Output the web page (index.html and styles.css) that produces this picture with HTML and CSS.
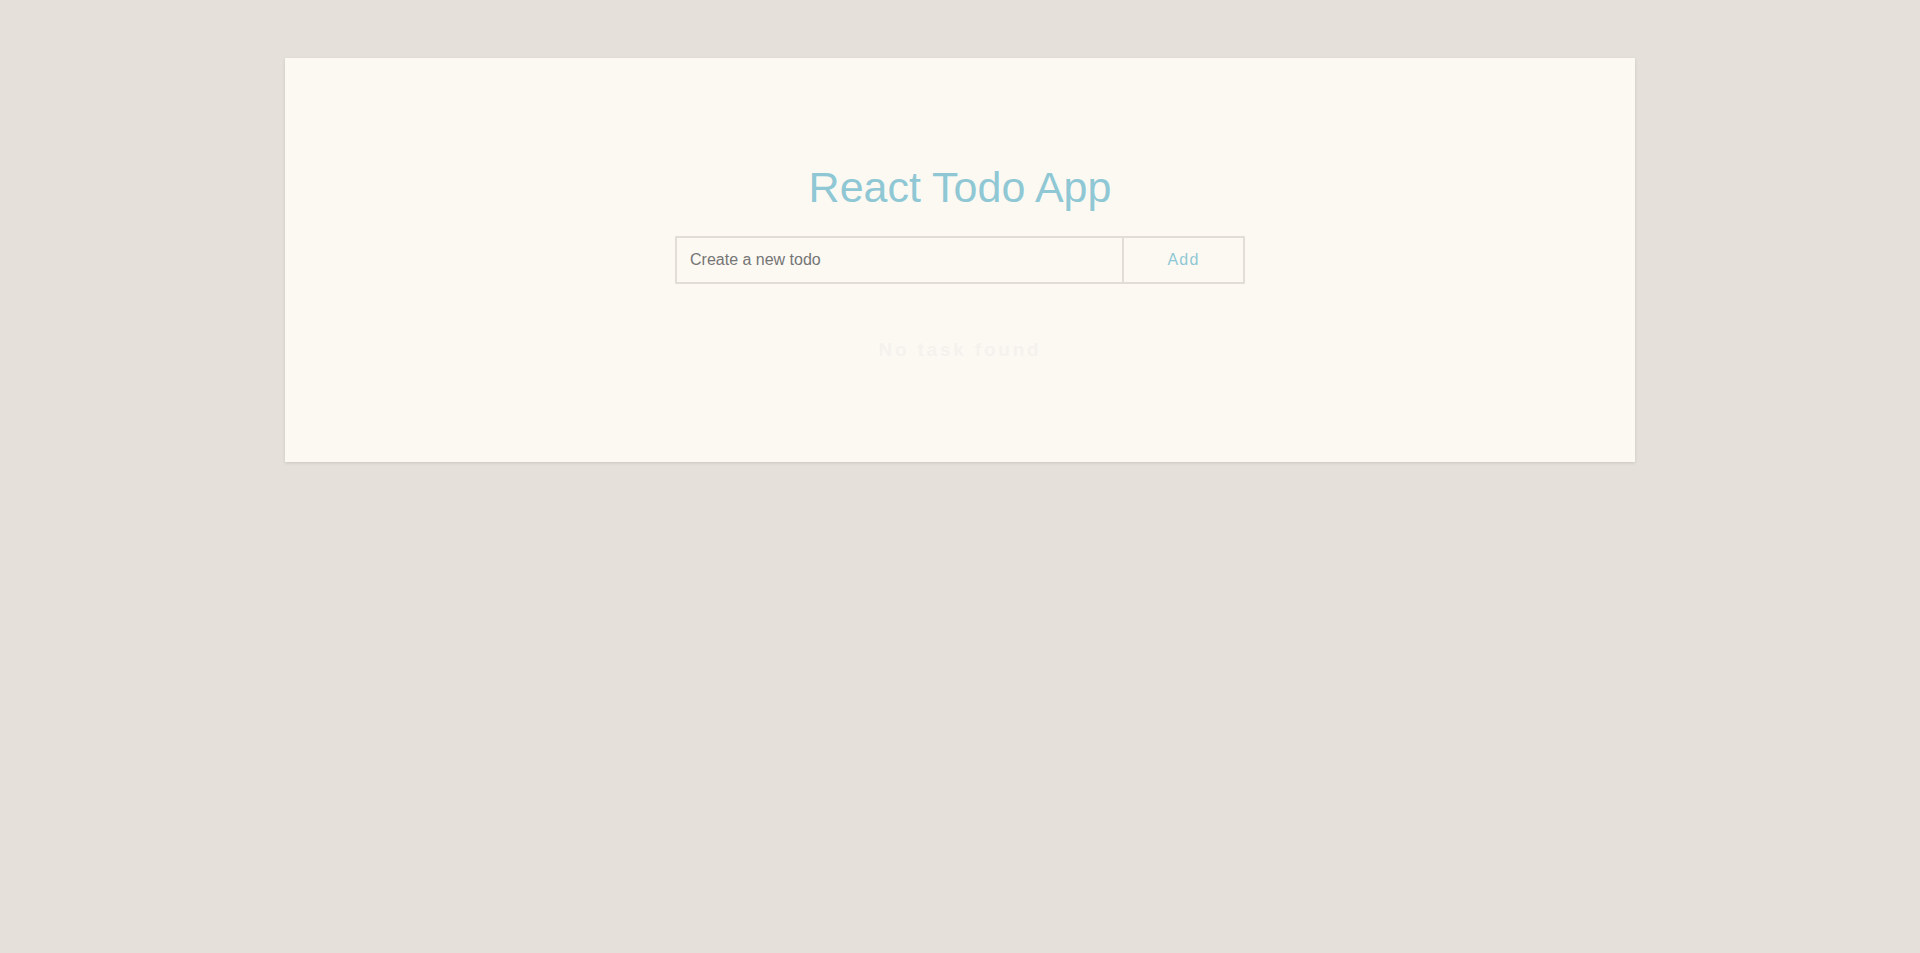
FILE: index.html
```html
<!DOCTYPE html>
<html lang="en">
<head>
<meta charset="utf-8">
<title>React Todo App</title>
<link rel="stylesheet" href="styles.css">
</head>
<body>
<main class="card">
  <h1 class="title">React Todo App</h1>
  <form class="todo-form">
    <input class="todo-input" type="text" placeholder="Create a new todo">
    <button class="todo-add" type="button">Add</button>
  </form>
  <p class="empty">No task found</p>
</main>
</body>
</html>
```

FILE: styles.css
```css
html, body {
  margin: 0;
  padding: 0;
}

body {
  background: #e5e0da;
  font-family: "Liberation Sans", Arial, sans-serif;
  min-height: 953px;
}

.card {
  width: 1350px;
  margin: 58px auto 0;
  box-sizing: border-box;
  background: #fcf9f3;
  box-shadow: 0 1px 3px rgba(0, 0, 0, 0.12);
  padding: 103px 0 100px;
  display: flex;
  flex-direction: column;
  align-items: center;
}

.title {
  margin: 0;
  font-size: 43px;
  line-height: 52px;
  font-weight: 400;
  color: #8fc8d4;
}

.todo-form {
  margin: 23px 0 0;
  display: flex;
  width: 570px;
  height: 48px;
  box-sizing: border-box;
  border: 2px solid #e2ddd5;
}

.todo-input {
  flex: 1;
  min-width: 0;
  border: 0;
  border-right: 2px solid #e2ddd5;
  background: transparent;
  padding: 0 13px;
  font-family: "Liberation Sans", Arial, sans-serif;
  font-size: 16px;
  color: #555;
  outline: none;
}

.todo-input::placeholder {
  color: #757575;
}

.todo-add {
  width: 119px;
  border: 0;
  background: transparent;
  font-family: "Liberation Sans", Arial, sans-serif;
  font-size: 16px;
  letter-spacing: 1.2px;
  color: #8fc8d4;
  padding: 0;
  cursor: pointer;
}

.empty {
  margin: 54px 0 0;
  font-size: 19px;
  line-height: 24px;
  font-weight: 700;
  letter-spacing: 2.8px;
  color: #f5f2ee;
}
```
